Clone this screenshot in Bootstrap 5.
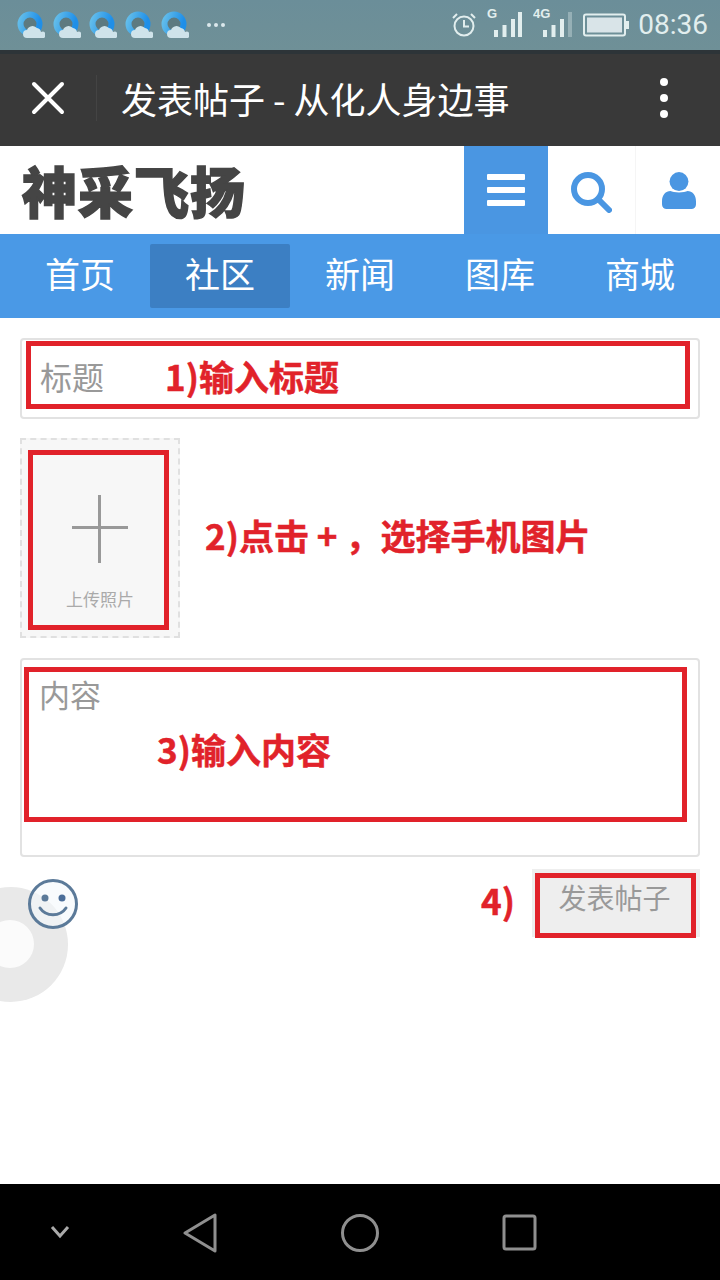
<!DOCTYPE html>
<html lang="zh-CN">
<head>
    <meta charset="UTF-8">
    <meta name="viewport" content="width=device-width, initial-scale=1.0">
    <title>发表帖子 - 从化人身边事</title>
    <link href="https://cdn.jsdelivr.net/npm/bootstrap@5.3.0/dist/css/bootstrap.min.css" rel="stylesheet">
    <style>
        html, body { height: 1280px; overflow: hidden; }
        body { font-family: "Liberation Sans", "Noto Sans CJK SC", sans-serif; background: #fff; position: relative; }
        .cjk { font-family: "Noto Sans CJK SC", sans-serif; }

        .status-bar { height: 50px; background: linear-gradient(#6b8e99, #6f9097); color: #e2eeee; padding: 0 12px 0 17px; }
        .cloud-row { gap: 8px; }
        .more-dots { gap: 3px; margin-left: 10px; }
        .more-dots i { display: block; width: 4px; height: 4px; border-radius: 50%; background: #dbe8ec; }
        .stat-right { gap: 10px; }
        .clock { font-family: Roboto, sans-serif; font-size: 28px; line-height: 1; margin-left: -1px; }

        .app-bar { height: 96px; background: #393939; border-top: 4px solid #2d3438; color: #fff; padding-bottom: 4px; }
        .close-cell { width: 97px; height: 46px; border-right: 1px solid #444; }
        .app-title { font-size: 36px; line-height: 1; margin-left: 24px; font-weight: 400; }
        .menu-dots { width: 8px; margin-right: 52px; gap: 8px; }
        .menu-dots i { display: block; width: 8px; height: 8px; border-radius: 50%; background: #fff; }

        .site-head { height: 88px; background: #fff; }
        .site-logo { font-size: 55px; font-weight: 900; color: #454545; line-height: 86px; padding-left: 22px; letter-spacing: 1px; -webkit-text-stroke: 1.5px #454545; }
        .head-btn { height: 88px; }
        .head-menu { width: 84px; background: #4a96e2; gap: 7px; }
        .head-menu i { display: block; width: 38px; height: 6px; background: #fff; border-radius: 1px; }
        .head-search { width: 88px; border-right: 1px solid #f5f5f5; padding-top: 4px; }
        .head-user { width: 84px; padding-top: 2px; padding-left: 2px; }

        .site-nav { height: 84px; background: #4a99e6; padding: 10px 10px; }
        .site-nav .nav-link { width: 140px; height: 64px; padding: 0; color: #fff; font-size: 35px; line-height: 58px; text-align: center; border-radius: 2px; }
        .site-nav .nav-link.active { background: #3c7fc3; }

        .post-form { padding: 20px 20px 0; }
        .text-field.form-control { height: 81px; border: 2px solid #e2e2e2; border-radius: 4px; padding: 16px 18px; color: #999; font-size: 32px; line-height: 1.25; position: relative; }
        .content-field.form-control { height: 199px; padding: 15px 17px; margin-top: 20px; font-size: 31px; }
        .upload-row { margin-top: 19px; }
        .upload-box { width: 160px; height: 200px; border: 2px dashed #e0e0e0; background: #f7f7f7; color: #aaa; font-size: 17px; position: relative; }
        .plus-v, .plus-h { position: absolute; background: #999; }
        .plus-v { left: 76px; top: 55px; width: 3px; height: 68px; }
        .plus-h { left: 50px; top: 86px; width: 56px; height: 3px; }
        .upload-label { position: absolute; left: 0; right: 0; top: 148px; text-align: center; line-height: 22px; }

        .form-foot { height: 70px; margin-top: 12px; position: relative; }
        .send-btn.btn { width: 168px; height: 68px; background: #eee; border: 0; border-radius: 0; color: #999; font-size: 28px; line-height: 1; padding: 0 3px 12px 0; }

        /* red instruction marks drawn over the form */
        .mark-box { position: absolute; border: 5px solid #e1222a; pointer-events: none; }
        .mark-title { left: 26px; top: 341px; width: 664px; height: 68px; }
        .mark-upload { left: 28px; top: 450px; width: 141px; height: 180px; }
        .mark-content { left: 24px; top: 667px; width: 663px; height: 155px; }
        .mark-send { left: 535px; top: 873px; width: 161px; height: 65px; }
        .mark-text { position: absolute; color: #e1222a; font-weight: 700; font-size: 35px; line-height: 40px; white-space: nowrap; -webkit-text-stroke: .5px #e1222a; }
        .note-1 { left: 165px; top: 356px; }
        .note-2 { left: 205px; top: 515px; }
        .note-3 { left: 157px; top: 729px; }
        .note-4 { left: 481px; top: 880px; }

        .float-ball { position: absolute; left: -47px; top: 887px; width: 115px; height: 115px; border-radius: 50%; background: #e9e9e9; }
        .float-ball::after { content: ""; position: absolute; left: 33px; top: 33px; width: 48px; height: 48px; border-radius: 50%; background: #fbfbfb; }
        .smiley { position: absolute; left: 27px; top: 878px; }

        .sys-bar { position: absolute; left: 0; right: 0; top: 1184px; height: 96px; background: #000; }
        .sys-bar svg { position: absolute; }
        .sys-down { left: 50px; top: 41px; }
        .sys-back { left: 183px; top: 29px; }
        .sys-home { left: 340px; top: 29px; }
        .sys-recent { left: 502px; top: 30px; }
    </style>
</head>
<body>
    <svg width="0" height="0" class="position-absolute">
        <defs>
            <linearGradient id="ringGrad" x1="0" y1="0" x2="1" y2="0.300">
                <stop offset="0" stop-color="#63bdea"/>
                <stop offset="1" stop-color="#1f8fe8"/>
            </linearGradient>
            <symbol id="weatherIcon" viewBox="0 0 28 28">
                <circle cx="13" cy="13" r="9.500" fill="#5d7a80" stroke="url(#ringGrad)" stroke-width="6"/>
                <path d="M10 27a4 4 0 0 1 0-8 6 6 0 0 1 10-2 5 5 0 0 1 4 4 3 3 0 0 1 3 6z" fill="#cfe3ea"/>
            </symbol>
        </defs>
    </svg>

    <div class="status-bar d-flex align-items-center">
        <div class="d-flex align-items-center cloud-row">
            <svg width="28" height="28"><use href="#weatherIcon"/></svg>
            <svg width="28" height="28"><use href="#weatherIcon"/></svg>
            <svg width="28" height="28"><use href="#weatherIcon"/></svg>
            <svg width="28" height="28"><use href="#weatherIcon"/></svg>
            <svg width="28" height="28"><use href="#weatherIcon"/></svg>
            <div class="more-dots d-flex"><i></i><i></i><i></i></div>
        </div>
        <div class="ms-auto d-flex align-items-center stat-right">
            <svg width="26" height="26" viewBox="0 0 26 26" fill="none" stroke="#e2eeee" stroke-width="2"><circle cx="13" cy="14" r="9.500"/><path d="M13 8v6.500h5M2 6l4-4M24 6l-4-4"/></svg>
            <svg width="36" height="38" viewBox="0 0 36 38" fill="#e2eeee"><text x="0" y="12" font-size="13" font-weight="700" font-family="Liberation Sans">G</text><rect x="7" y="24" width="4" height="7"/><rect x="15.500" y="19" width="4" height="12"/><rect x="24" y="13" width="4" height="18"/><rect x="31" y="6" width="4" height="25"/></svg>
            <svg width="40" height="38" viewBox="0 0 40 38" fill="#e2eeee"><text x="0" y="12" font-size="13" font-weight="700" font-family="Liberation Sans">4G</text><rect x="10" y="24" width="4" height="7"/><rect x="18.500" y="19" width="4" height="12"/><rect x="27" y="13" width="4" height="18"/><rect x="35" y="6" width="4" height="25" opacity=".35"/></svg>
            <svg width="46" height="24" viewBox="0 0 46 24"><rect x="1" y="1.500" width="41" height="21" rx="2" fill="none" stroke="#e2eeee" stroke-width="2"/><rect x="4" y="4.500" width="35" height="15" fill="#d9e4e8"/><rect x="43" y="8" width="3" height="8" fill="#e2eeee"/></svg>
            <span class="clock">08:36</span>
        </div>
    </div>

    <div class="app-bar d-flex align-items-center">
        <div class="close-cell d-flex align-items-center justify-content-center">
            <svg width="34" height="34" viewBox="0 0 34 34" stroke="#fff" stroke-width="4" stroke-linecap="round"><path d="M3 3l28 28M31 3L3 31"/></svg>
        </div>
        <div class="app-title cjk">发表帖子 - 从化人身边事</div>
        <div class="menu-dots ms-auto d-flex flex-column"><i></i><i></i><i></i></div>
    </div>

    <div class="site-head d-flex">
        <div class="site-logo cjk">神采飞扬</div>
        <div class="ms-auto d-flex">
            <div class="head-btn head-menu d-flex flex-column align-items-center justify-content-center"><i></i><i></i><i></i></div>
            <div class="head-btn head-search d-flex align-items-center justify-content-center">
                <svg width="41" height="41" viewBox="0 0 41 41" fill="none" stroke="#4a96e2"><circle cx="17" cy="17" r="14" stroke-width="6"/><path d="M28 28l10 10" stroke-width="6" stroke-linecap="round"/></svg>
            </div>
            <div class="head-btn head-user d-flex align-items-center justify-content-center">
                <svg width="34" height="38" viewBox="0 0 36 40" fill="#4a96e2"><circle cx="18" cy="10" r="10"/><path d="M0 31c0-7 4-11 9-11 3 2 15 2 18 0 5 0 9 4 9 11v3c0 3-2 5-5 5H5c-3 0-5-2-5-5z"/></svg>
            </div>
        </div>
    </div>

    <nav class="site-nav nav cjk flex-nowrap">
        <a class="nav-link" href="#">首页</a>
        <a class="nav-link active" href="#">社区</a>
        <a class="nav-link" href="#">新闻</a>
        <a class="nav-link" href="#">图库</a>
        <a class="nav-link" href="#">商城</a>
    </nav>

    <form class="post-form cjk">
        <div class="text-field form-control">标题</div>
        <div class="upload-row">
            <div class="upload-box">
                <span class="plus-v"></span><span class="plus-h"></span>
                <span class="upload-label">上传照片</span>
            </div>
        </div>
        <div class="text-field content-field form-control">内容</div>
        <div class="form-foot d-flex justify-content-end">
            <button type="button" class="send-btn btn">发表帖子</button>
        </div>
    </form>

    <div class="float-ball"></div>
    <svg class="smiley" width="52" height="52" viewBox="0 0 52 52" fill="none" stroke="#5b7a99" stroke-width="3"><circle cx="26" cy="26" r="23.500" fill="#f4f9fb" fill-opacity=".6"/><circle cx="18" cy="20" r="3.500" fill="#5b7a99" stroke="none"/><circle cx="35" cy="20" r="3.500" fill="#4b6e99" stroke="none"/><path d="M13 30c6 9 20 9 26 0" stroke-linecap="round"/></svg>

    <div class="mark-box mark-title"></div>
    <div class="mark-box mark-upload"></div>
    <div class="mark-box mark-content"></div>
    <div class="mark-box mark-send"></div>
    <div class="mark-text note-1 cjk">1)输入标题</div>
    <div class="mark-text note-2 cjk">2)点击 + ，选择手机图片</div>
    <div class="mark-text note-3 cjk">3)输入内容</div>
    <div class="mark-text note-4 cjk">4)</div>

    <div class="sys-bar">
        <svg class="sys-down" width="20" height="14" viewBox="0 0 20 14" fill="none" stroke="#aaa" stroke-width="3"><path d="M2 2l8 9 8-9"/></svg>
        <svg class="sys-back" width="36" height="40" viewBox="0 0 36 40" fill="none" stroke="#8f8f8f" stroke-width="3" stroke-linejoin="round"><path d="M32 2v36L2 20z"/></svg>
        <svg class="sys-home" width="40" height="40" viewBox="0 0 40 40" fill="none" stroke="#8f8f8f" stroke-width="3"><circle cx="20" cy="20" r="17.500"/></svg>
        <svg class="sys-recent" width="36" height="38" viewBox="0 0 36 38" fill="none" stroke="#8f8f8f" stroke-width="3" stroke-linejoin="round"><rect x="2" y="2" width="31" height="33" rx="2"/></svg>
    </div>

    <script src="https://cdn.jsdelivr.net/npm/bootstrap@5.3.0/dist/js/bootstrap.bundle.min.js"></script>
</body>
</html>
